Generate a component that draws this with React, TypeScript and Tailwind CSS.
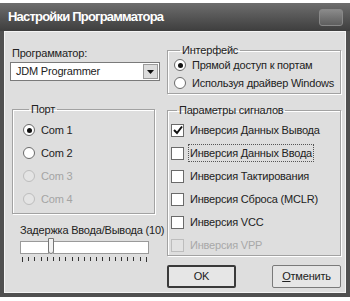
import React from 'react'

const font = { fontFamily: '"Liberation Sans", Arial, sans-serif' }

function Radio({ label, checked, disabled }: { label: string; checked?: boolean; disabled?: boolean }) {
  return (
    <div className={`flex items-center gap-[6px] h-[18px] whitespace-nowrap ${disabled ? 'text-[#a4a4a4]' : 'text-[#222]'}`}>
      <span className={`w-[12px] h-[12px] shrink-0 rounded-full border flex items-center justify-center ${disabled ? 'border-[#bdbdbd] bg-[#e4e4e4]' : 'border-[#6a6a6a] bg-white'}`}>
        {checked && <span className="w-[5px] h-[5px] rounded-full bg-[#111]" />}
      </span>
      <span>{label}</span>
    </div>
  )
}

function Check({ label, checked, disabled, focus }: { label: string; checked?: boolean; disabled?: boolean; focus?: boolean }) {
  return (
    <div className={`flex items-center gap-[6px] h-[16px] whitespace-nowrap ${disabled ? 'text-[#a8a8a8]' : 'text-[#222]'}`}>
      <span className={`w-[13px] h-[13px] border flex items-center justify-center ${disabled ? 'border-[#bdbdbd] bg-[#e2e2e2]' : 'border-[#6a6a6a] bg-white'}`}>
        {checked && (
          <svg width="10" height="10" viewBox="0 0 10 10">
            <path d="M1 5 L4 8 L9 1.5" stroke="#111" strokeWidth="2" fill="none" />
          </svg>
        )}
      </span>
      <span className={focus ? 'border border-dotted border-[#555] px-[1px] -mx-[2px]' : ''}>{label}</span>
    </div>
  )
}

function Group({ title, className, children }: { title: string; className: string; children: React.ReactNode }) {
  return (
    <fieldset className={`border border-[#a2a2a2] shadow-[inset_1px_1px_0_#fff,1px_1px_0_#fff] ${className}`}>
      <legend className="px-[2px] ml-[6px] text-[#222] leading-[12px] whitespace-nowrap">{title}</legend>
      {children}
    </fieldset>
  )
}

export default function App() {
  const ticks = Array.from({ length: 21 })
  return (
    <div className="w-[350px] h-[301px] bg-white pt-[3px] text-[11px] tracking-[-0.2px]" style={font}>
      <div className="h-[294px] bg-[#505050] px-[4px] pb-[4px] flex flex-col rounded-t-[4px]">
        <div className="h-[28px] flex items-center justify-between bg-gradient-to-b from-[#6e6e6e] to-[#3e3e3e] -mx-[4px] pl-[8px] pr-[7px]">
          <span className="text-white font-bold text-[13px] tracking-[-0.8px]">
            Настройки Программатора
          </span>
          <span className="w-[24px] h-[17px] rounded-[3px] border border-[#888] bg-gradient-to-b from-[#8a8a8a] to-[#5e5e5e]" />
        </div>
        <div className="flex-1 bg-[#dedede] border border-[#f4f4f4] flex gap-[7px] pl-[5px] pr-[4px] pt-[13px]">
          <div className="w-[150px] flex flex-col">
            <div className="text-[#222] h-[17px] pl-[2px]">Программатор:</div>
            <div className="h-[19px] w-[150px] bg-white border border-[#7a7a7a] flex items-center justify-between pl-[5px] pr-[1px] text-[#222]">
              <span>JDM Programmer</span>
              <span className="w-[15px] h-[15px] bg-[#dcdcdc] border border-[#9a9a9a] flex items-center justify-center">
                <svg width="7" height="4" viewBox="0 0 7 4"><path d="M0 0 H7 L3.5 4 Z" fill="#111" /></svg>
              </span>
            </div>
            <Group title="Порт" className="mt-[22px] ml-[2px] w-[143px] h-[111px] pl-[10px] pt-[6px] flex flex-col gap-[5px]">
              <Radio label="Com 1" checked />
              <Radio label="Com 2" />
              <Radio label="Com 3" disabled />
              <Radio label="Com 4" disabled />
            </Group>
            <div className="mt-[8px] ml-[10px] text-[#222] h-[16px] whitespace-nowrap">Задержка Ввода/Вывода (10)</div>
            <div className="ml-[10px] flex items-end w-[129px] h-[16px]">
              <span className="w-[29px] h-[13px] bg-white border border-[#9a9a9a]" />
              <span className="w-[6px] h-[16px] bg-[#f2f2f2] border border-[#777] rounded-b-[3px] -mx-[1px] relative" />
              <span className="flex-1 h-[13px] bg-white border border-[#9a9a9a]" />
            </div>
            <div className="ml-[12px] mt-[3px] w-[125px] flex justify-between">
              {ticks.map((_, i) => (
                <span key={i} className={`w-[1px] bg-[#333] ${i === 0 || i === 20 ? 'h-[5px]' : 'h-[4px]'}`} />
              ))}
            </div>
          </div>
          <div className="w-[174px] flex flex-col">
            <Group title="Интерфейс" className="-mt-[1px] w-[174px] h-[50px] pl-[6px] flex flex-col">
              <Radio label="Прямой доступ к портам" checked />
              <Radio label="Используя драйвер Windows" />
            </Group>
            <Group title="Параметры сигналов" className="mt-[10px] w-[174px] h-[152px] pl-[3px] pt-[6px] flex flex-col gap-[7px]">
              <Check label="Инверсия Данных Вывода" checked />
              <Check label="Инверсия Данных Ввода" focus />
              <Check label="Инверсия Тактирования" />
              <Check label="Инверсия Сброса (MCLR)" />
              <Check label="Инверсия VCC" />
              <Check label="Инверсия VPP" disabled />
            </Group>
            <div className="mt-[9px] flex justify-between">
              <button className="w-[69px] h-[23px] border-2 border-[#3a3a3a] bg-[#e6e6e6] text-[#222] rounded-[2px]">OK</button>
              <button className="w-[69px] h-[23px] border border-[#7a7a7a] bg-[#e6e6e6] text-[#222] rounded-[2px]">
                <span className="underline">О</span>тменить
              </button>
            </div>
          </div>
        </div>
      </div>
    </div>
  )
}
